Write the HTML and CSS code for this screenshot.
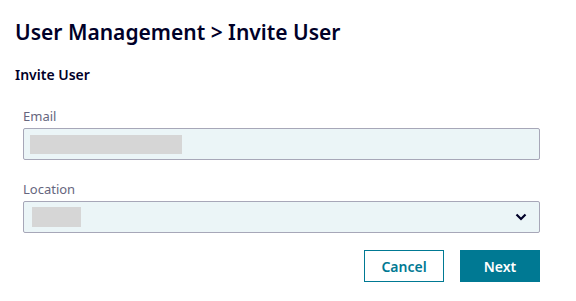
FILE: index.html
```html
<!DOCTYPE html>
<html>
<head lang="en">
    <meta charset="UTF-8">
    <title>Invite User</title>
    <link rel="stylesheet" href="styles.css">
</head>
<body>
<div class="page">
    <h1 class="title">User Management &gt; Invite User</h1>
    <h2 class="subtitle">Invite User</h2>
    <form class="form">
        <div class="field">
            <label class="label">Email</label>
            <div class="input">
                <span class="mask mask-email"></span>
            </div>
        </div>
        <div class="field">
            <label class="label">Location</label>
            <div class="input select">
                <span class="mask mask-location"></span>
                <svg class="chevron" width="12" height="8" viewBox="0 0 12 8">
                    <path d="M1.5 1.5 L6 6 L10.5 1.5" fill="none" stroke="#000028" stroke-width="2.2"/>
                </svg>
            </div>
        </div>
        <div class="actions">
            <button type="button" class="btn btn-secondary">Cancel</button>
            <button type="button" class="btn btn-primary">Next</button>
        </div>
    </form>
</div>
</body>
</html>
```

FILE: styles.css
```css
*{
    margin: 0;
    padding: 0;
    box-sizing: border-box;
}
html,body{
    width: 100%;
    height: 100%;
    background: #fff;
}
body{
    font-family: "Noto Sans", "Open Sans", sans-serif;
    color: #000028;
}
.page{
    padding: 17px 36px 0 15px;
}
.title{
    font-size: 21px;
    font-weight: 600;
    line-height: 30px;
}
.subtitle{
    margin-top: 18px;
    font-size: 14px;
    font-weight: 600;
    line-height: 20px;
}
.form{
    padding-left: 8px;
    margin-top: 21px;
}
.field{
    margin-bottom: 19px;
}
.label{
    display: block;
    font-size: 13px;
    color: #66667e;
    line-height: 20px;
    margin-bottom: 2px;
}
.input{
    height: 32px;
    background: #ebf5f7;
    border: 1px solid #a7a7b8;
    border-radius: 2px;
    display: flex;
    align-items: center;
    padding: 0 6px;
}
.mask{
    display: block;
    background: #d6d6d6;
    height: 19px;
}
.mask-email{
    width: 152px;
}
.mask-location{
    width: 49px;
    height: 20px;
    margin-left: 2px;
}
.select{
    justify-content: space-between;
    padding-right: 12px;
}
.chevron{
    display: block;
}
.actions{
    display: flex;
    justify-content: flex-end;
    gap: 16px;
    margin-top: -2px;
}
.btn{
    width: 80px;
    height: 32px;
    font-family: inherit;
    font-size: 14px;
    font-weight: 600;
    border: 1px solid #007993;
    cursor: pointer;
}
.btn-secondary{
    background: #fff;
    color: #007993;
}
.btn-primary{
    background: #007993;
    color: #fff;
}
```
